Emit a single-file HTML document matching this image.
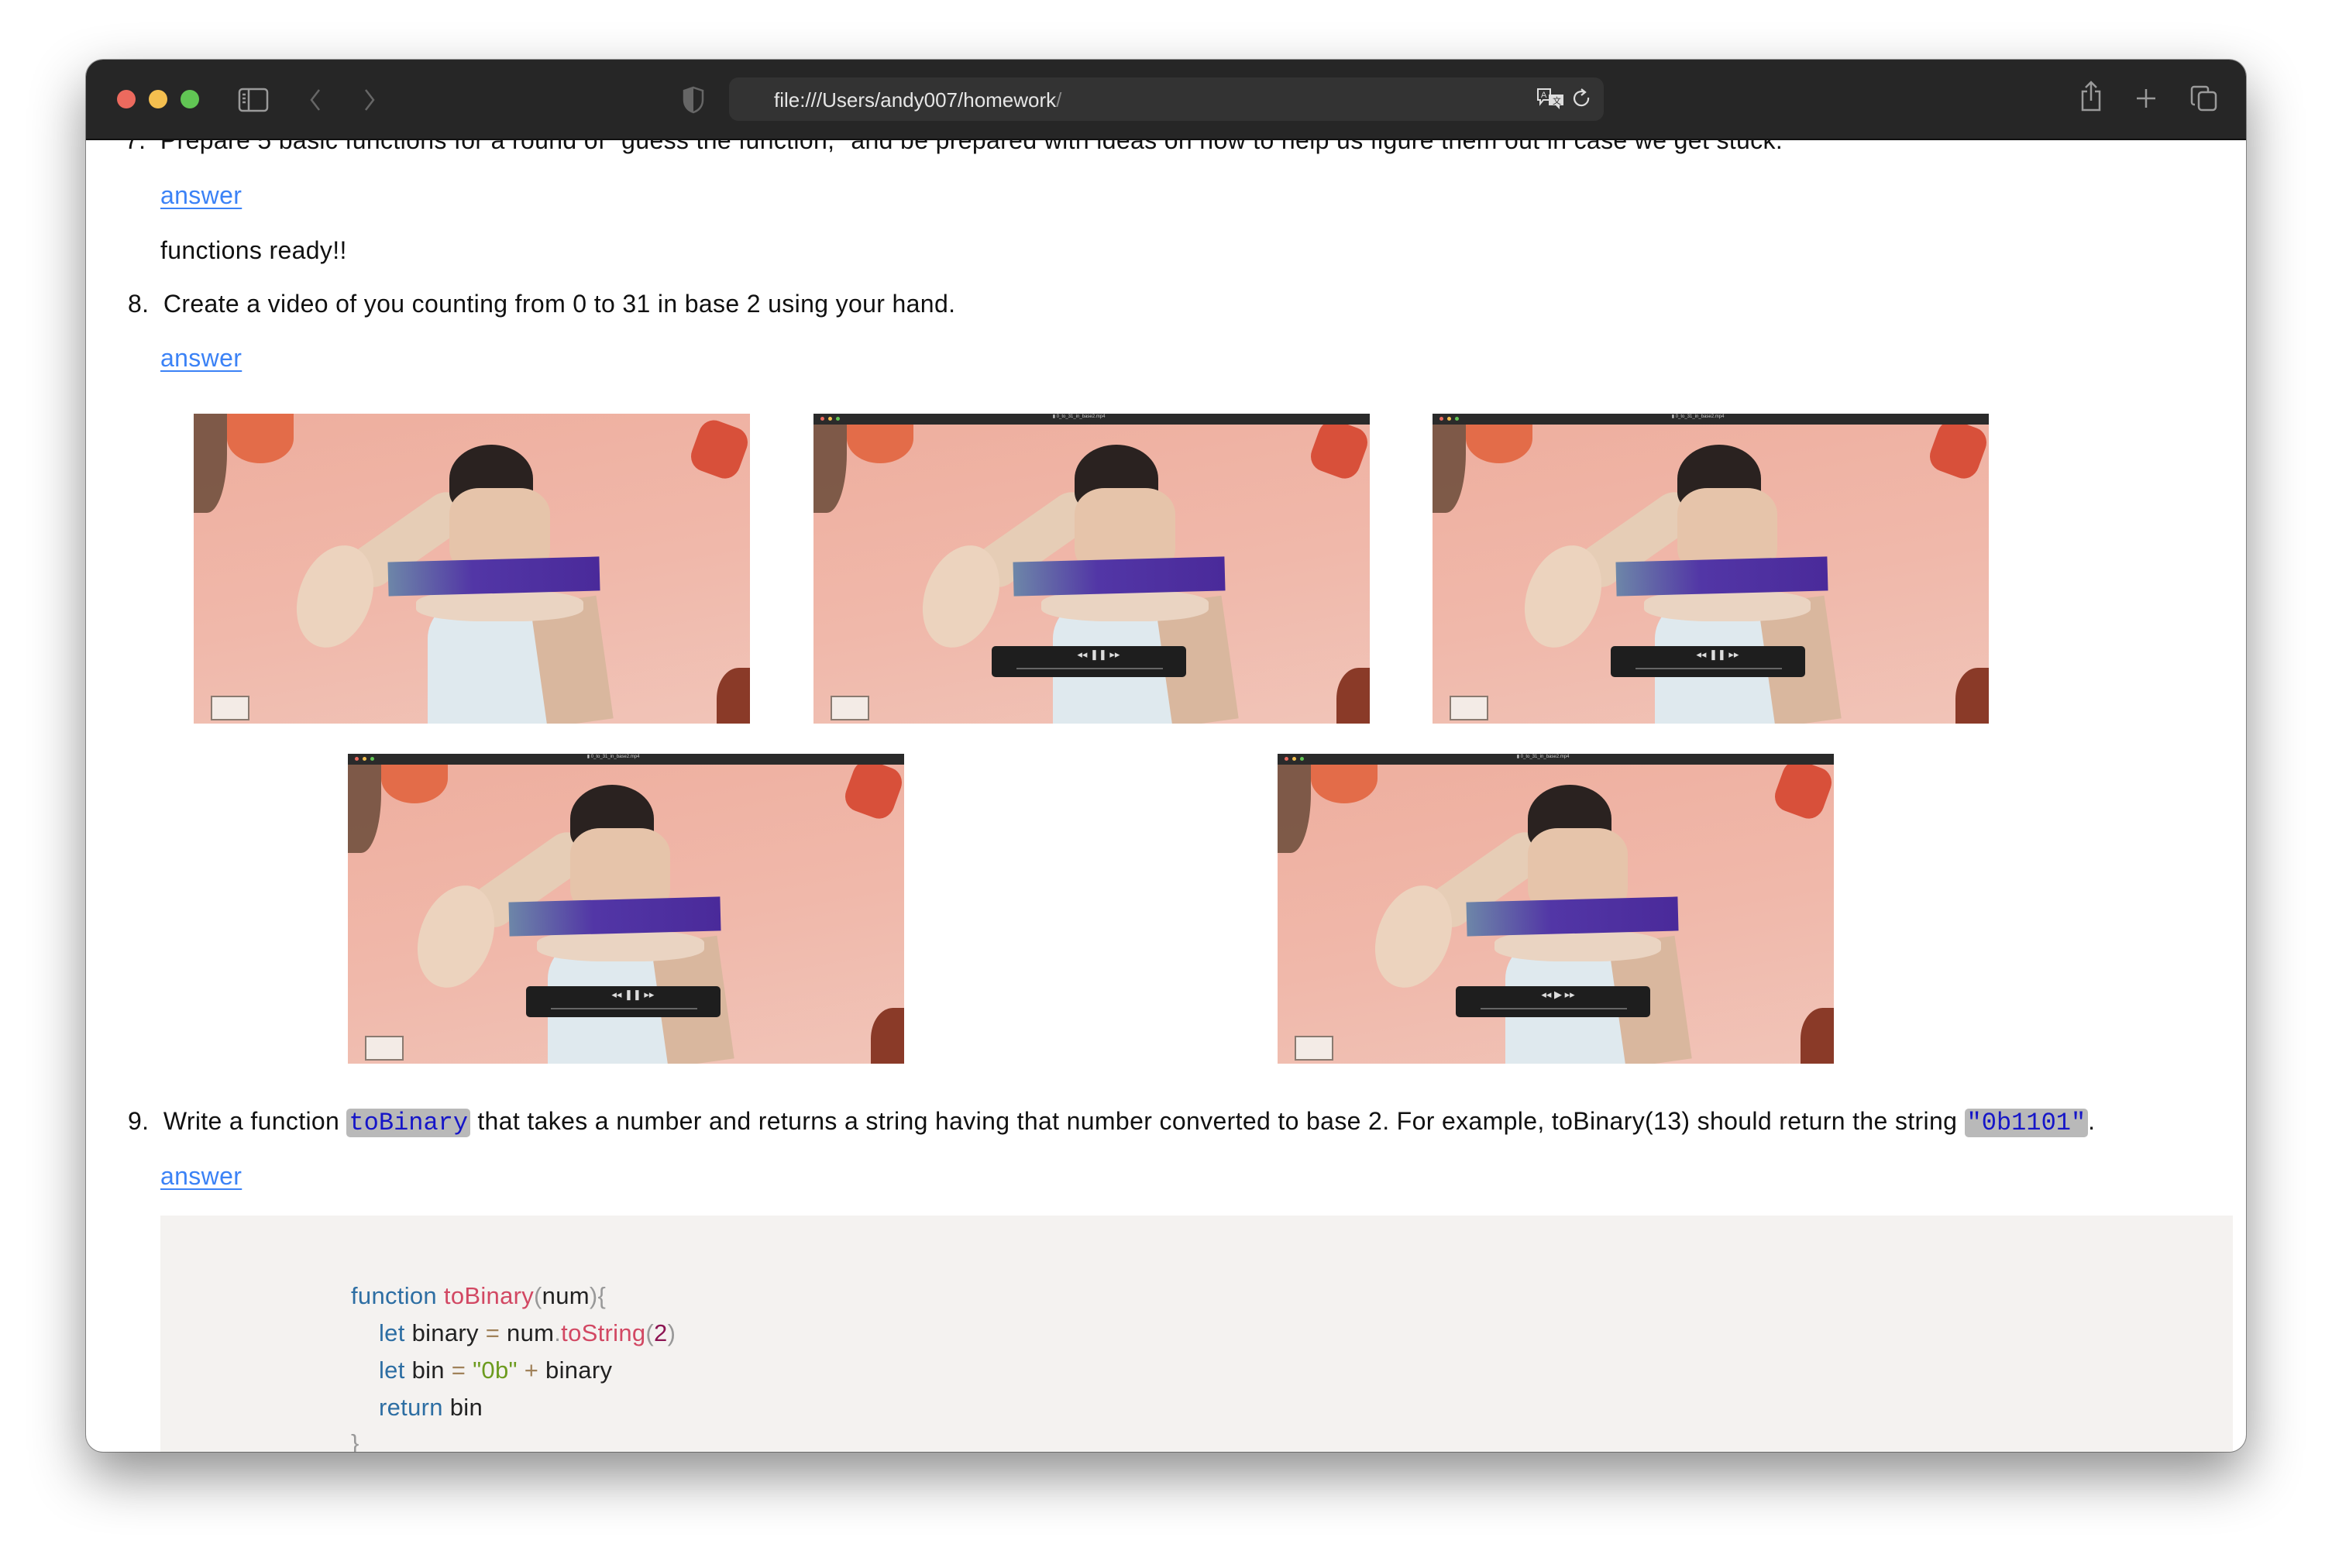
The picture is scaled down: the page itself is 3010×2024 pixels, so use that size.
<!DOCTYPE html>
<html><head><meta charset="utf-8"><style>
*{margin:0;padding:0;box-sizing:border-box}
html,body{width:3010px;height:2024px;background:#fff;overflow:hidden;font-family:"Liberation Sans",sans-serif}
.win{position:absolute;left:111px;top:77px;width:2788px;height:1797px;border-radius:22px;overflow:hidden;background:#fff;box-shadow:0 30px 70px rgba(0,0,0,.45),0 0 0 1px rgba(0,0,0,.35)}
.tb{position:absolute;left:0;top:0;width:100%;height:104px;background:#262626;border-bottom:2px solid #111;z-index:5}
.dot{position:absolute;top:39px;width:24px;height:24px;border-radius:50%}
.addr{position:absolute;left:830px;top:23px;width:1129px;height:56px;border-radius:12px;background:#333}
.url{position:absolute;left:58px;top:14px;font-size:26px;color:#e6e6e6}
.content{position:absolute;left:0;top:0;width:100%;height:100%;color:#111;font-size:32px;letter-spacing:0.35px}
.t{position:absolute;white-space:nowrap}
.a{color:#3b82f6;text-decoration:underline;text-decoration-thickness:2px;text-underline-offset:5px}
.img{position:absolute;width:718px;height:400px;overflow:hidden;background:linear-gradient(170deg,#eeae9e 0%,#f0b8aa 55%,#f1c4b8 100%);letter-spacing:0}
.img div{position:absolute}
.code{font-family:"Liberation Mono",monospace;color:#1515c8;background:#b9b9b9;border-radius:5px;padding:0 3px;letter-spacing:0}
.cb{position:absolute;left:96px;top:1492px;width:2675px;height:400px;background:#f4f2f0}
.c{position:absolute;font-size:31px;white-space:nowrap;color:#222;letter-spacing:0.3px}
.k{color:#2d6ea3}.f{color:#d24863}.p{color:#999}.o{color:#a0825a}.s{color:#6c9b1e}.n{color:#8c1452}
</style></head><body>
<div class="win">
 <div class="content">
  <div class="t" style="left:50px;top:86px">7.&nbsp; Prepare 5 basic functions for a round of "guess the function," and be prepared with ideas on how to help us figure them out in case we get stuck.</div>
  <div class="t a" style="left:96px;top:157px">answer</div>
  <div class="t" style="left:96px;top:228px">functions ready!!</div>
  <div class="t" style="left:54px;top:297px">8.&nbsp; Create a video of you counting from 0 to 31 in base 2 using your hand.</div>
  <div class="t a" style="left:96px;top:367px">answer</div>

  <div class="img" style="left:139px;top:457px" id="i1"></div>
  <div class="img" style="left:939px;top:457px" id="i2"></div>
  <div class="img" style="left:1738px;top:457px" id="i3"></div>
  <div class="img" style="left:338px;top:896px" id="i4"></div>
  <div class="img" style="left:1538px;top:896px" id="i5"></div>

  <div class="t" style="left:54px;top:1352px">9.&nbsp; Write a function <span class="code">toBinary</span> that takes a number and returns a string having that number converted to base 2. For example, toBinary(13) should return the string <span class="code">"0b1101"</span>.</div>
  <div class="t a" style="left:96px;top:1423px">answer</div>
  <div class="cb"></div>
  <div class="c" style="left:342px;top:1578px"><span class="k">function</span> <span class="f">toBinary</span><span class="p">(</span>num<span class="p">){</span></div>
  <div class="c" style="left:378px;top:1626px"><span class="k">let</span> binary <span class="o">=</span> num<span class="p">.</span><span class="f">toString</span><span class="p">(</span><span class="n">2</span><span class="p">)</span></div>
  <div class="c" style="left:378px;top:1674px"><span class="k">let</span> bin <span class="o">=</span> <span class="s">"0b"</span> <span class="o">+</span> binary</div>
  <div class="c" style="left:378px;top:1722px"><span class="k">return</span> bin</div>
  <div class="c p" style="left:342px;top:1768px">}</div>
 </div>

 <div class="tb">
  <div class="dot" style="left:40px;background:#ec6a5e"></div>
  <div class="dot" style="left:81px;background:#f4bf4f"></div>
  <div class="dot" style="left:122px;background:#61c554"></div>
  <svg style="position:absolute;left:196px;top:36px" width="40" height="32" viewBox="0 0 40 32" fill="none" stroke="#9a9a9a" stroke-width="2.5"><rect x="2" y="2" width="36" height="28" rx="4"/><line x1="14" y1="2" x2="14" y2="30"/><line x1="6" y1="9" x2="10" y2="9"/><line x1="6" y1="14" x2="10" y2="14"/><line x1="6" y1="19" x2="10" y2="19"/></svg>
  <svg style="position:absolute;left:286px;top:36px" width="20" height="32" viewBox="0 0 20 32" fill="none" stroke="#666" stroke-width="2.5"><path d="M15 3 L5 16 L15 29"/></svg>
  <svg style="position:absolute;left:356px;top:36px" width="20" height="32" viewBox="0 0 20 32" fill="none" stroke="#666" stroke-width="2.5"><path d="M5 3 L15 16 L5 29"/></svg>
  <svg style="position:absolute;left:770px;top:34px" width="28" height="36" viewBox="0 0 28 36"><path d="M14 2 L26 6 V18 C26 27 20 32 14 34 C8 32 2 27 2 18 V6 Z" fill="none" stroke="#666" stroke-width="2.5"/><path d="M14 2 L2 6 V18 C2 27 8 32 14 34 Z" fill="#666"/></svg>
  <div class="addr"><div class="url">file:///Users/andy007/homework<span style="color:#888">/</span></div>
   <svg style="position:absolute;left:1041px;top:12px" width="40" height="32" viewBox="0 0 40 32"><path d="M3 3 H19 V17 H10 L6 22 V17 H3 Z" fill="none" stroke="#ddd" stroke-width="2"/><text x="7" y="14" font-size="11" fill="#ddd" font-family="Liberation Sans">A</text><path d="M17 10 H36 V24 H31 V29 L26 24 H17 Z" fill="#ddd"/><text x="22" y="22" font-size="11" fill="#333" font-family="Noto Sans CJK SC, sans-serif">文</text></svg>
   <svg style="position:absolute;left:1088px;top:13px" width="26" height="30" viewBox="0 0 26 30" fill="none" stroke="#ddd" stroke-width="2.2"><path d="M16 6 A9 9 0 1 0 21 13"/><path d="M12 2 L17 6 L12 10"/></svg>
  </div>
  <svg style="position:absolute;left:2574px;top:26px" width="28" height="42" viewBox="0 0 28 42" fill="none" stroke="#9a9a9a" stroke-width="2.5"><path d="M9 15 H3 V39 H25 V15 H19"/><path d="M14 27 V3 M7 10 L14 3 L21 10"/></svg>
  <svg style="position:absolute;left:2645px;top:36px" width="28" height="28" viewBox="0 0 28 28" stroke="#9a9a9a" stroke-width="2.5"><path d="M14 2 V26 M2 14 H26"/></svg>
  <svg style="position:absolute;left:2716px;top:32px" width="36" height="36" viewBox="0 0 36 36" fill="none" stroke="#9a9a9a" stroke-width="2.5"><rect x="11" y="10" width="22" height="23" rx="4"/><path d="M6 26 H5 a3 3 0 0 1-3-3 V6 a3 3 0 0 1 3-3 H20 a3 3 0 0 1 3 3 V10"/></svg>
 </div>
</div>
<script>
function build(id,bar,ctrl,play,v){
 var e=document.getElementById(id),h='';
 h+='<div style="left:0;top:0;width:6%;height:32%;background:#6a4a38;border-radius:0 0 60% 0;opacity:.85"></div>';
 h+='<div style="left:6%;top:0;width:12%;height:16%;background:#e0603a;border-radius:0 0 50% 50%;opacity:.85"></div>';
 h+='<div style="left:90%;top:3%;width:9%;height:17%;background:#d8503a;transform:rotate(20deg);border-radius:30%"></div>';
 h+='<div style="left:'+(29+v)+'%;top:46%;width:24%;height:14%;background:#e6cdb6;border-radius:40px;transform:rotate(-35deg);transform-origin:left"></div>';
 h+='<div style="left:'+(19+v)+'%;top:42%;width:13%;height:34%;background:#ecd3be;border-radius:50%;transform:rotate(20deg)"></div>';
 h+='<div style="left:'+(42+v)+'%;top:60%;width:24%;height:42%;background:#dfe9ee;border-radius:30% 30% 0 0"></div>';
 h+='<div style="left:'+(62+v)+'%;top:60%;width:12%;height:40%;background:#d9b79e;transform:rotate(-8deg)"></div>';
 h+='<div style="left:'+(46+v)+'%;top:10%;width:15%;height:22%;background:#2a2220;border-radius:50% 50% 30% 30%"></div>';
 h+='<div style="left:'+(46+v)+'%;top:24%;width:18%;height:28%;background:#e6c4aa;border-radius:30%"></div>';
 h+='<div style="left:'+(40+v)+'%;top:57%;width:30%;height:10%;background:#ead4c2;border-radius:40%"></div>';
 h+='<div style="left:'+(35+v)+'%;top:47%;width:38%;height:11%;background:linear-gradient(90deg,#6d86a8,#5236a6 40%,#4a2a9a);transform:rotate(-1.5deg)"></div>';
 h+='<div style="left:3%;top:91%;width:7%;height:8%;background:#f3ebe6;border:2px solid #8a7a70"></div>';
 h+='<div style="left:94%;top:82%;width:8%;height:20%;background:#8a3a28;border-radius:50% 0 0 0"></div>';
 if(bar)h+='<div style="left:0;top:0;width:100%;height:3.6%;background:#2a2a2a"><div style="left:1.2%;top:30%;width:5px;height:5px;border-radius:50%;background:#ec6a5e;position:absolute"></div><div style="left:2.6%;top:30%;width:5px;height:5px;border-radius:50%;background:#f4bf4f;position:absolute"></div><div style="left:4%;top:30%;width:5px;height:5px;border-radius:50%;background:#61c554;position:absolute"></div><div style="position:absolute;left:43%;top:0;font-size:6px;color:#ccc">▮ 0_to_31_in_base2.mp4</div></div>';
 if(ctrl)h+='<div style="left:32%;top:75%;width:35%;height:10%;background:#1e1e1e;border-radius:5px"><div style="position:absolute;left:44%;top:8%;font-size:13px;color:#ddd">◂◂ '+(play?'▶':'❚❚')+' ▸▸</div><div style="position:absolute;left:13%;top:70%;width:75%;height:2px;background:#666"></div></div>';
 e.innerHTML=h;
}
build('i1',0,0,0,0);
build('i2',1,1,0,1);
build('i3',1,1,0,-2);
build('i4',1,1,0,-6);
build('i5',1,1,1,-1);
</script>
</body></html>
